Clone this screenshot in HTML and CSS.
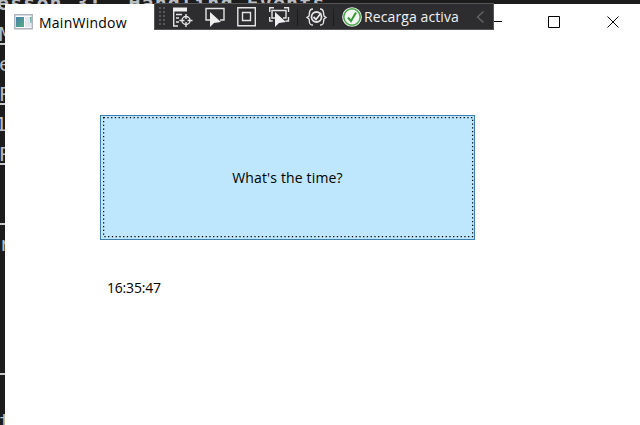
FILE: index.html
```html
<!DOCTYPE html>
<html lang="es">
<head>
<meta charset="utf-8">
<title>MainWindow</title>
<link rel="stylesheet" href="styles.css">
</head>
<body>
<div class="desktop">
  <div class="editor">
    <span class="line l1">esson 3:&nbsp; Handling Events</span>
    <span class="line link l2">M</span>
    <span class="line l3">e</span>
    <span class="line link l4">P</span>
    <span class="line l5">1</span>
    <span class="line link l6">P</span>
    <span class="line link l7"></span>
    <span class="line l8">r</span>
    <span class="line link l9"></span>
    <span class="line l10">t</span>
  </div>
  <main class="window">
    <header class="titlebar">
      <svg class="app-icon" width="19" height="16" viewBox="0 0 19 16">
        <defs><linearGradient id="g" x2="1" y2="1"><stop stop-color="#4780a8"/><stop offset="1" stop-color="#54ae82"/></linearGradient></defs>
        <rect x=".75" y=".75" width="17.5" height="14" fill="#fff" stroke="#b1b4be" stroke-width="1.500"/>
        <path fill="url(#g)" d="M2 3h8v10H2z"/><path fill="#e3e7ee" d="M11 3h6v10h-6z"/><path fill="#58a894" d="M16 3h1.500v6h-1z"/>
      </svg>
      <h1 class="title">MainWindow</h1>
      <svg class="controls" width="135" height="14" viewBox="0 0 135 14" fill="none" stroke="#000">
        <path d="M0 6.500h12M58.500 1.500h11v11h-11zM117.500 1.500l11 11M128.500 1.500l-11 11"/>
      </svg>
    </header>
    <section class="content">
      <button class="time-button"><span class="label">What's the time?</span>
        <svg class="focus" width="371" height="121"><rect x=".6" y=".6" width="369" height="119"/></svg>
      </button>
      <p class="time"><span>16:35:47</span></p>
    </section>
  </main>
  <nav class="toolbar">
    <span class="grip"></span>
    <svg class="tools" width="174" height="26" viewBox="0 0 174 26" fill="none" stroke="#e4e4e4" stroke-width="1.400">
      <path fill="#eee" stroke="none" d="M4 3.500h14v4H4z"/><path d="M4.700 7v15H9M7 10.500h6M7 14h3M7 18h3"/>
      <circle cx="17" cy="16.500" r="4"/><path d="M17 10v5M17 18v5M10.500 16.500h5M18.500 16.500h5"/>
      <path d="M41 16h-4V4.500h18V16h-4"/><path fill="#eee" stroke="none" d="M41 8v15l4-4 7-1z"/>
      <path d="M68.800 3.800h17.500v18H68.800z"/><path d="M73.500 8.500h8v8h-8z"/>
      <path d="M100.700 8V3.700H105M115 3.700h4.500V8M119.500 13v4h-3M100.700 13v4h3M106 14h-3V6.500h14V14h-3"/><path fill="#eee" stroke="none" d="M106 8v15l4-4 7-1z"/>
      <path stroke="#1c1c1c" stroke-width="1" d="M128.500 5v17"/>
      <path d="M144 5c-5 0-3 5-4 7l-2 1.500 2 1.500c1 2-1 6 4 6M151 5c5 0 3 5 4 7l2 1.500-2 1.500c-1 2 1 6-4 6"/><circle cx="147.500" cy="13" r="5" stroke-width="1.800"/><path stroke-width="1.800" d="M144.500 13l2.500 2.500 5-6.500"/>
      <path stroke="#1c1c1c" stroke-width="1" d="M164.500 5v17"/>
    </svg>
    <svg class="check" width="20" height="20" viewBox="0 0 20 20" fill="none">
      <circle cx="10" cy="10" r="9.800" fill="#f3f5f3"/><circle cx="10" cy="10" r="8.200" stroke="#46a546" stroke-width="1.500"/><path stroke="#369c36" stroke-width="2" d="M6 10.500l3 3.500 5-8.500"/>
    </svg>
    <span class="reload">Recarga activa</span>
    <svg class="chevron" width="9" height="14" viewBox="0 0 9 14" fill="none" stroke="#67676b" stroke-width="1.300"><path d="M7.500 1.500L1.500 7l6 5.500"/></svg>
  </nav>
</div>
</body>
</html>
```
FILE: styles.css
```css
* { box-sizing: border-box; }
body { margin: 0; font-family: "Open Sans", "Noto Sans", sans-serif; font-size: 14px; color: #000; }
.desktop { position: relative; width: 640px; height: 425px; overflow: hidden; background: #1c1c1c; }
.line { position: absolute; left: -1px; font: 20px/20px "DejaVu Sans Mono", monospace; color: #b9bdc2; white-space: pre; }
.link { height: 21px; width: 12px; border-bottom: 2px solid #c8c8c8; }
.l1 { left: -3px; top: -7px; font-size: 20px; font-weight: bold; letter-spacing: 1.1px; }
.l2 { top: 24px; }
.l3 { top: 54px; }
.l4 { top: 84px; }
.l5 { top: 114px; left: -5px; }
.l6 { top: 144px; }
.l7 { top: 204px; }
.l8 { top: 234px; left: -1px; }
.l9 { top: 354px; }
.l10 { top: 411px; left: -1px; }
.window { position: absolute; left: 5px; top: 4px; width: 635px; height: 421px; background: #fff; }
.titlebar { display: flex; align-items: center; height: 36px; padding: 0 0 0 9px; }
.title { margin: 0 0 0 6px; font-size: 14px; font-weight: 400; letter-spacing: .25px; }
.controls { margin-left: auto; margin-right: 15px; }
.content { padding: 75px 0 0 95px; }
.time-button { position: relative; display: flex; align-items: center; justify-content: center; width: 375px; height: 125px; padding: 0; border: 1px solid #3c7fb1; background: #bee6fd; color: #000; font: inherit; }
.label { letter-spacing: .15px; }
.focus { position: absolute; left: 2px; top: 1px; }
.focus rect { fill: none; stroke: #000; stroke-width: 1.25; stroke-dasharray: 1.25 2.5; }
.time { margin: 38px 0 0 7px; line-height: 20px; letter-spacing: -.2px; }
.toolbar { position: absolute; left: 154px; top: 3px; display: flex; align-items: center; width: 340px; height: 27px; border: 1px solid #555; background: #2d2d30; color: #f1f1f1; }
.grip { width: 7px; height: 21px; margin-left: 3px; background: radial-gradient(circle, #59595c 0.8px, transparent 1px) 0 0 / 4px 4px; }
.tools { margin-left: 4px; }
.check { margin-left: -1px; }
.reload { margin-left: 2px; white-space: nowrap; letter-spacing: .1px; }
.chevron { margin-left: auto; margin-right: 8px; }
```
